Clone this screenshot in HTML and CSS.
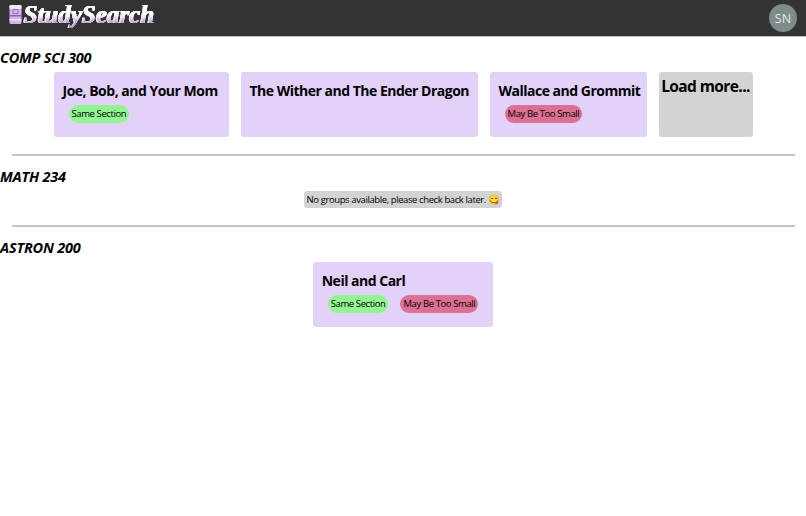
FILE: index.html
```html
<!DOCTYPE html>
<html lang="en">
<head>
<meta charset="utf-8">
<title>StudySearch</title>
<link rel="stylesheet" href="styles.css">
</head>
<body>
<header class="topbar">
  <div class="brand">
    <svg class="logo" viewBox="0 0 13 19" width="13" height="19" aria-hidden="true">
      <rect x="0.5" y="0" width="12" height="19" rx="1.5" fill="#d3b4ee"/>
      <rect x="0.5" y="0" width="12" height="4" rx="1" fill="#efe6f7"/>
      <rect x="0.5" y="10" width="12" height="1.5" fill="#8a63ad"/>
      <rect x="0.5" y="14" width="12" height="1.5" fill="#efe6f7"/>
      <path d="M4 4.5h5v4h-5z" fill="none" stroke="#8a63ad" stroke-width="0.8"/>
    </svg>
    <span class="wordmark">StudySearch</span>
  </div>
  <div class="avatar">SN</div>
</header>
<main>
  <section class="course">
    <h2 class="course-title">COMP SCI 300</h2>
    <div class="groups">
      <article class="card card-joe"><h3>Joe, Bob, and Your Mom</h3><div class="tags"><span class="tag good">Same Section</span></div></article>
      <article class="card card-wither"><h3>The Wither and The Ender Dragon</h3><div class="tags"></div></article>
      <article class="card card-wallace"><h3>Wallace and Grommit</h3><div class="tags"><span class="tag warn">May Be Too Small</span></div></article>
      <div class="more">Load more...</div>
    </div>
  </section>
  <hr class="rule">
  <section class="course">
    <h2 class="course-title">MATH 234</h2>
    <div class="groups"><p class="empty">No groups available, please check back later. <span class="emoji">😋</span></p></div>
  </section>
  <hr class="rule">
  <section class="course">
    <h2 class="course-title">ASTRON 200</h2>
    <div class="groups">
      <article class="card"><h3>Neil and Carl</h3><div class="tags"><span class="tag good">Same Section</span><span class="tag warn">May Be Too Small</span></div></article>
    </div>
  </section>
</main>
</body>
</html>
```

FILE: styles.css
```css
* { box-sizing: border-box; }
html, body { margin: 0; padding: 0; }
body { font-family: "Open Sans", "Noto Sans", sans-serif; color: #000; background: #fff; }
.topbar {
  height: 37px;
  background: #333;
  border-bottom: 1px solid #bbb;
  display: flex;
  align-items: center;
  justify-content: space-between;
  padding: 0 9px;
}
.brand { display: flex; align-items: center; gap: 2px; margin-top: -7px; }
.logo { display: block; }
.wordmark {
  font-family: "Liberation Serif", serif;
  font-weight: 700;
  font-style: italic;
  font-size: 25px;
  line-height: 26px;
  background: linear-gradient(#fff 50%, #9a78c0 90%);
  -webkit-background-clip: text;
  background-clip: text;
  color: transparent;
  filter: drop-shadow(0.5px 0 0 #f0e8f6) drop-shadow(-0.4px 0 0 #f0e8f6) drop-shadow(0 0.4px 0 #d9c8ea);
}
.avatar {
  width: 28px;
  height: 28px;
  border-radius: 50%;
  background: #7d8b8a;
  color: #e8e8e8;
  font-size: 12.5px;
  display: flex;
  align-items: center;
  justify-content: center;
}
.course { padding-top: 11px; }
.course-title {
  margin: 0;
  font-size: 14.5px;
  line-height: 20px;
  letter-spacing: -0.2px;
  font-weight: 700;
  font-style: italic;
}
.groups { display: flex; justify-content: center; gap: 12px; margin-top: 4px; }
.card {
  background: #e2d1f9;
  border-radius: 3px;
  padding: 9px;
  height: 65px;
}
.card-joe { width: 175px; }
.card-wither { width: 237px; }
.card-wallace { width: 157px; }
.card h3 { margin: 0; font-size: 14px; line-height: 20px; letter-spacing: -0.5px; font-weight: 700; white-space: nowrap; }
.tags { display: flex; margin-top: 4px; }
.tag {
  font-size: 9.5px;
  line-height: 18px;
  letter-spacing: -0.4px;
  height: 18px;
  margin: 0 6px;
  padding: 0 3px;
  border-radius: 9px;
  white-space: nowrap;
}
.good { background: #92f592; }
.warn { background: #db7093; }
.more {
  width: 94px;
  height: 65px;
  background: #d3d3d3;
  border-radius: 3px;
  padding-top: 4px;
  font-size: 15.5px;
  line-height: 20px;
  letter-spacing: -0.6px;
  font-weight: 700;
  text-align: center;
}
.rule { height: 2px; border: 0; background: #c4c4c4; margin: 17px 11px 0 12px; }
.empty {
  margin: 0;
  background: #d3d3d3;
  border-radius: 3px;
  height: 17px;
  padding: 0 3px;
  font-size: 9.5px;
  line-height: 17px;
  letter-spacing: -0.4px;
}
.emoji { font-family: "Noto Color Emoji", "Noto Sans", sans-serif; }
```
